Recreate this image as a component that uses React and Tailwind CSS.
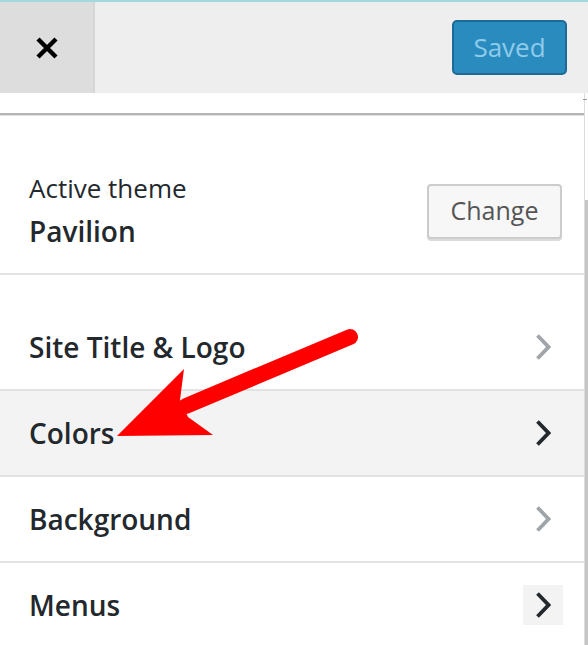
import React from "react";

const font = { fontFamily: '"Open Sans", "Noto Sans", sans-serif' };

function Chevron({ dark }) {
  return (
    <svg width="16" height="28" viewBox="0 0 16 28" fill="none">
      <polyline
        points="2.5,2.5 13.5,14 2.5,25.5"
        stroke={dark ? "#23282d" : "#a0a5aa"}
        strokeWidth="3.8"
        strokeLinejoin="miter"
      />
    </svg>
  );
}

function SectionRow({ label, dark = false, boxed = false, active = false }) {
  return (
    <div
      className={`flex h-[86px] shrink-0 items-center justify-between border-b-2 border-[#e2e2e2] pl-[29px] pr-[21px] ${
        active ? "bg-[#f3f3f3]" : "bg-white"
      }`}
    >
      <span className="text-[28px] font-semibold leading-none text-[#23282d]">{label}</span>
      <span
        className={`flex h-[40px] w-[40px] items-center justify-center ${
          boxed ? "bg-[#f3f3f3]" : ""
        }`}
      >
        <Chevron dark={dark} />
      </span>
    </div>
  );
}

export default function App() {
  return (
    <div className="relative h-[645px] w-[588px] overflow-hidden bg-white" style={font}>
      <div className="h-[2px] bg-[#a3d9dd]" />

      {/* header */}
      <div className="flex h-[91px] items-stretch bg-[#eeeeee]">
        <button className="flex w-[95px] items-center justify-center border-r-2 border-[#d6d6d6] bg-[#dddddd]">
          <svg width="22" height="22" viewBox="0 0 22 22">
            <path d="M2 2 L20 20 M20 2 L2 20" stroke="#000" strokeWidth="4.5" />
          </svg>
        </button>
        <div className="flex flex-1 items-center justify-end pr-[21px]">
          <button className="h-[55px] w-[115px] rounded-[5px] border-2 border-[#1d6b95] bg-[#2a8bbf] text-[26px] text-[#8ecbea]">
            Saved
          </button>
        </div>
      </div>

      <div className="flex h-[552px]">
        <div className="flex flex-1 flex-col">
          <div className="h-[20px] shrink-0" />
          <div className="h-[2px] shrink-0 bg-[#b5b5b5]" />
          <div className="h-[1px] shrink-0 bg-[#e0e0e0]" />

          {/* active theme */}
          <div className="flex shrink-0 items-center justify-between border-b-2 border-[#e2e2e2] pb-[25px] pl-[29px] pr-[22px] pt-[58px]">
            <div className="flex flex-col">
              <span className="text-[26px] leading-[28px] text-[#23282d]">Active theme</span>
              <span className="mt-[12px] text-[28px] font-semibold leading-[34px] text-[#23282d]">
                Pavilion
              </span>
            </div>
            <button className="h-[55px] w-[135px] rounded-[4px] border-2 border-[#cccccc] bg-[#f7f7f7] text-[25px] text-[#555555] shadow-[0_2px_0_#dcdcdc]">
              Change
            </button>
          </div>

          <div className="h-[30px] shrink-0" />
          <SectionRow label="Site Title & Logo" />
          <SectionRow label="Colors" dark active />
          <SectionRow label="Background" />
          <SectionRow label="Menus" dark boxed />
        </div>

        {/* scrollbar */}
        <div className="relative w-[4px] border-l border-[#dcdcdc]">
          <div className="absolute left-[-2px] top-[6px] h-[1px] w-[4px] bg-[#999]" />
          <div className="absolute bottom-0 left-0 right-0 top-[107px] bg-[#c6c6c6]" />
        </div>
      </div>

      {/* red annotation arrow */}
      <svg
        className="pointer-events-none absolute left-0 top-0"
        width="588"
        height="645"
        viewBox="0 0 588 645"
      >
        <line x1="350" y1="337" x2="186" y2="406" stroke="#ff0000" strokeWidth="16" strokeLinecap="round" />
        <polygon points="184,369 180,400 188,417 213,435 117,436" fill="#ff0000" />
      </svg>
    </div>
  );
}
